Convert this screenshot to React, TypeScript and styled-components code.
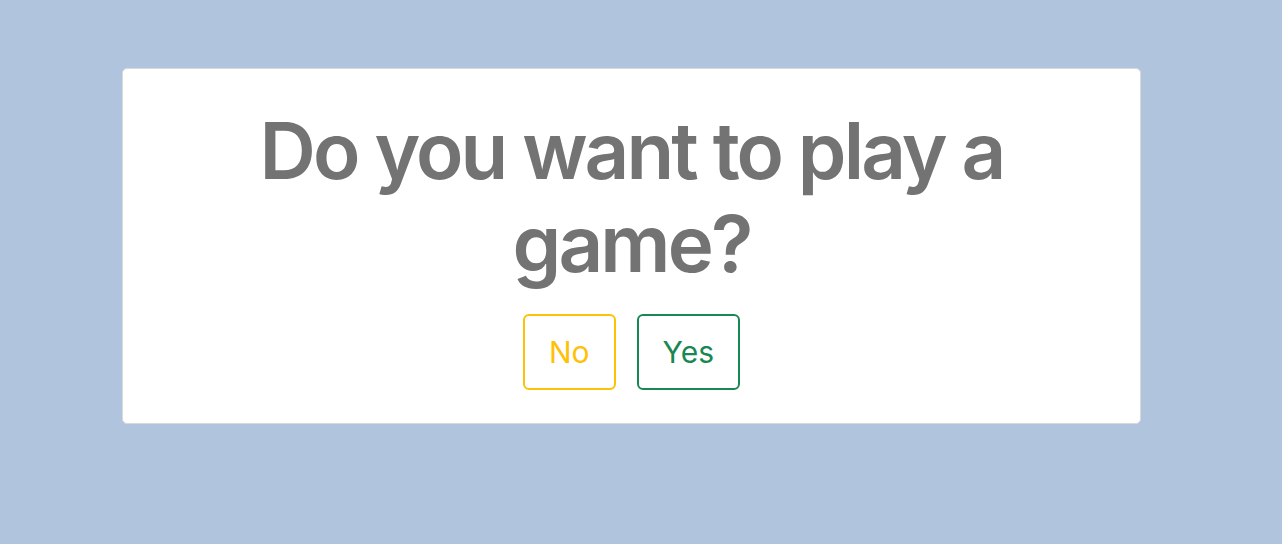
import styled, { createGlobalStyle } from 'styled-components';

const GlobalStyle = createGlobalStyle`
    html, body {
        margin: 0;
        padding: 0;
        background: #b0c4de;
        font-family: Inter, "Liberation Sans", sans-serif;
    }
`

const Page = styled.div`
    min-height: 544px;
    padding: 68px 141px 0 122px;
    box-sizing: border-box;
`

const Card = styled.div`
    background: white;
    border: 1px solid #d9d9d9;
    border-radius: 5px;
    padding: 35px 20px 33px;
    display: flex;
    flex-direction: column;
    align-items: center;
`

const Question = styled.h1`
    margin: 0 0 24px;
    max-width: 800px;
    text-align: center;
    font-size: 78px;
    line-height: 93px;
    font-weight: 600;
    letter-spacing: -2.9px;
    color: #737373;
`

const Buttons = styled.div`
    display: flex;
    gap: 21px;
`

const Choice = styled.button<{ $color: string }>`
    font-family: inherit;
    font-size: 30px;
    line-height: 44px;
    padding: 14px 24px;
    background: white;
    color: ${p => p.$color};
    border: 2px solid ${p => p.$color};
    border-radius: 6px;
    cursor: pointer;
`

const App = () => {
    return (
        <Page>
            <GlobalStyle />
            <Card>
                <Question>Do you want to play a game?</Question>
                <Buttons>
                    <Choice $color='#ffc107'>No</Choice>
                    <Choice $color='#198754'>Yes</Choice>
                </Buttons>
            </Card>
        </Page>
    )
}

export default App
